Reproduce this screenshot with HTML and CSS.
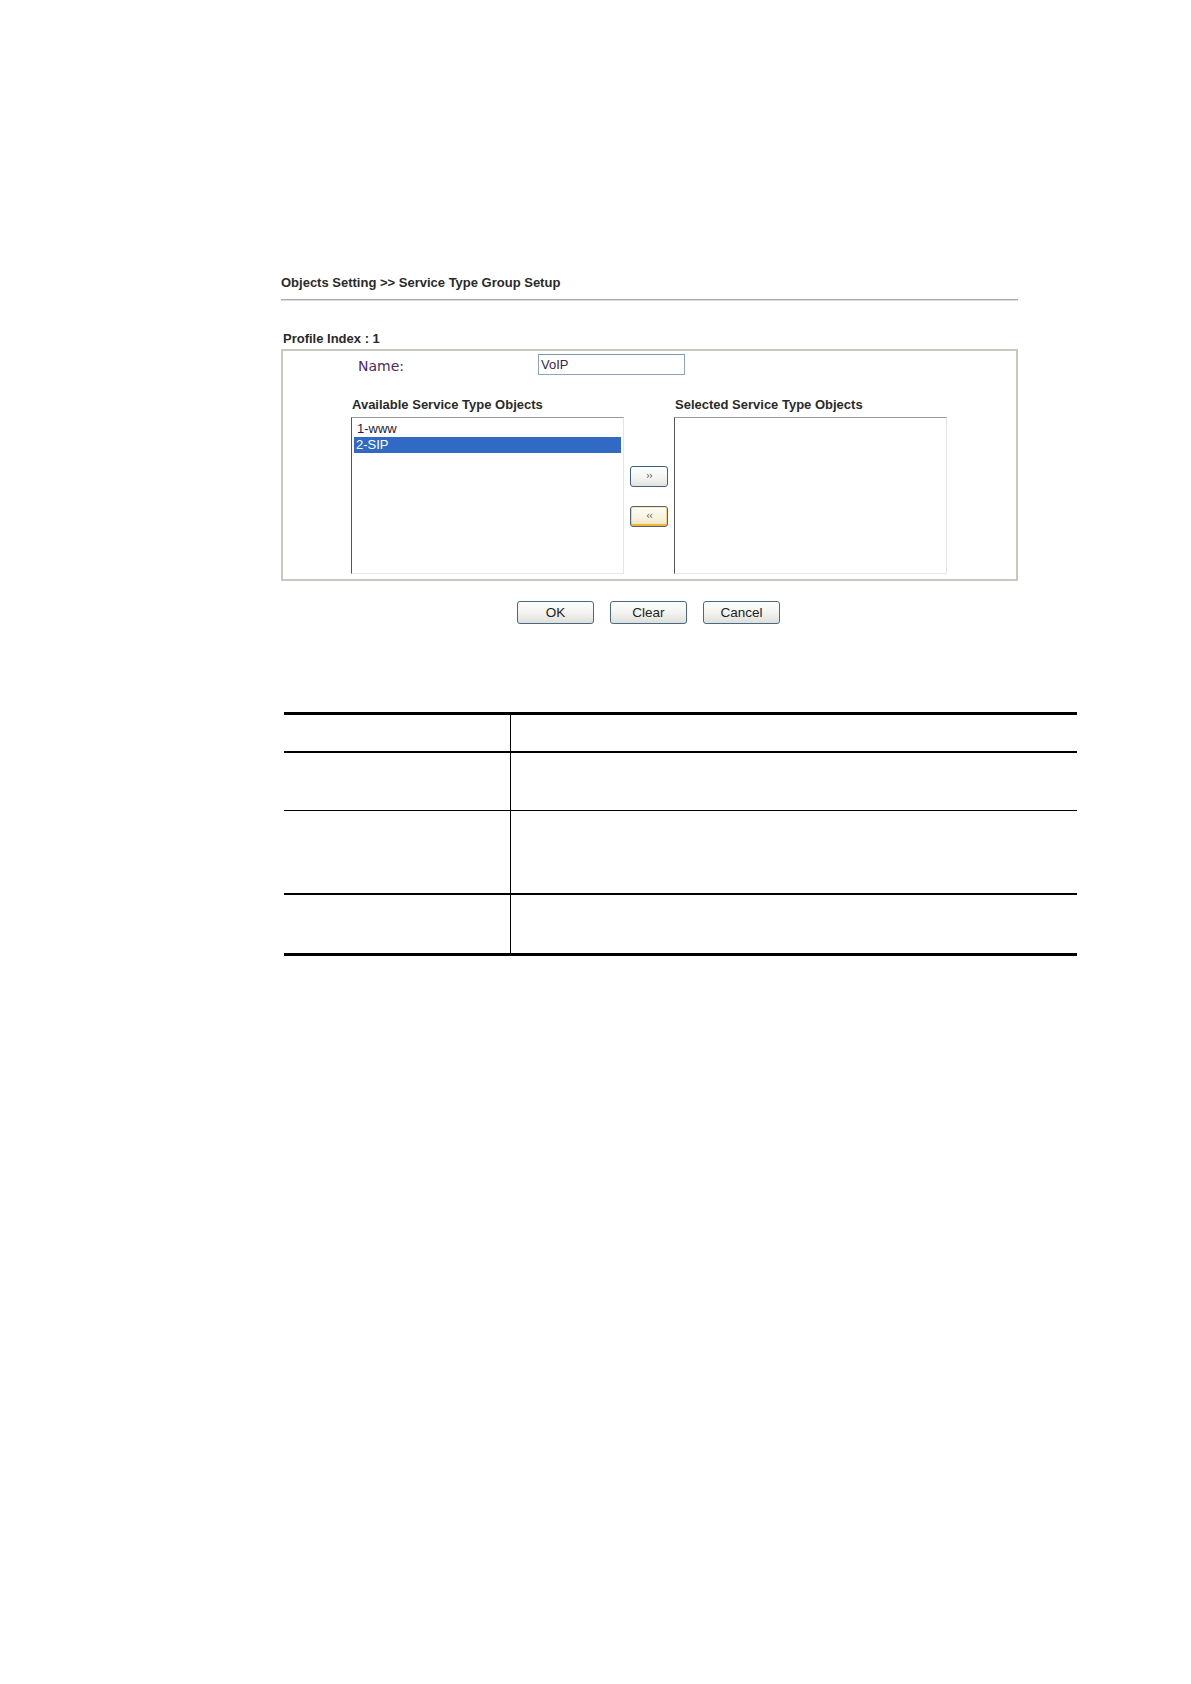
FILE: index.html
```html
<!DOCTYPE html>
<html lang="en">
<head>
<meta charset="utf-8">
<title>Objects Setting &gt;&gt; Service Type Group Setup</title>
<link rel="stylesheet" href="styles.css">
</head>
<body>
<div class="page">
  <div class="title">Objects Setting &gt;&gt; Service Type Group Setup</div>
  <div class="rule"></div>
  <div class="profile">Profile Index : 1</div>
  <div class="box">
    <div class="name-row">
      <span class="name-label">Name:</span>
      <input class="name-input" type="text" value="VoIP">
    </div>
    <div class="lists">
      <div class="list-col">
        <div class="list-label">Available Service Type Objects</div>
        <div class="listbox">
          <div class="item">1-www</div>
          <div class="item selected">2-SIP</div>
        </div>
      </div>
      <div class="move-col">
        <button class="move">&rsaquo;&rsaquo;</button>
        <button class="move hot">&lsaquo;&lsaquo;</button>
      </div>
      <div class="list-col">
        <div class="list-label sel">Selected Service Type Objects</div>
        <div class="listbox"></div>
      </div>
    </div>
  </div>
  <div class="actions">
    <button class="btn">OK</button>
    <button class="btn">Clear</button>
    <button class="btn">Cancel</button>
  </div>
</div>
<div class="doc-table">
  <div class="trow r1"><div class="tc left"></div><div class="tc right"></div></div>
  <div class="trow r2"><div class="tc left"></div><div class="tc right"></div></div>
  <div class="trow r3"><div class="tc left"></div><div class="tc right"></div></div>
  <div class="trow r4"><div class="tc left"></div><div class="tc right"></div></div>
</div>
</body>
</html>
```
FILE: styles.css
```css
html, body {
  margin: 0;
  padding: 0;
  background: #ffffff;
}
body {
  font-family: "Liberation Sans", Arial, sans-serif;
  color: #111;
}
.page {
  margin-left: 281px;
  width: 737px;
  padding-top: 275px;
}
.title {
  font-size: 13px;
  font-weight: bold;
  line-height: 16px;
  color: #2a2a2a;
}
.rule {
  margin-top: 8px;
  height: 1px;
  background: #a8a8a8;
  border-bottom: 1px solid #dcdcdc;
}
.profile {
  margin-top: 30px;
  margin-left: 2px;
  font-size: 13px;
  font-weight: bold;
  line-height: 16px;
  color: #2a2a2a;
}
.box {
  margin-top: 2px;
  border: 2px solid #c6c9be;
  height: 228px;
  box-sizing: content-box;
  padding: 0;
}
.name-row {
  display: flex;
  align-items: center;
  padding-top: 3px;
  height: 21px;
}
.name-label {
  font-family: "DejaVu Sans", Verdana, sans-serif;
  font-size: 14px;
  color: #4a2c5c;
  margin-left: 75px;
  margin-top: 3px;
  width: 180px;
}
.name-input {
  box-sizing: border-box;
  width: 147px;
  height: 21px;
  margin: 0;
  border: 1px solid #8ea3bd;
  border-top-color: #7f96b4;
  padding: 0 2px;
  font-family: "Liberation Sans", Arial, sans-serif;
  font-size: 13px;
  color: #3a2648;
  background: #fff;
  outline: none;
}
.lists {
  display: flex;
  margin-top: 22px;
  margin-left: 68px;
}
.list-col {
  display: flex;
  flex-direction: column;
}
.list-label {
  font-size: 13px;
  font-weight: bold;
  line-height: 16px;
  color: #2a2a2a;
  margin-left: 1px;
  height: 16px;
  margin-bottom: 4px;
}
.listbox {
  box-sizing: border-box;
  width: 273px;
  height: 157px;
  border-top: 1px solid #9a9a9a;
  border-left: 1px solid #555555;
  border-right: 1px solid #e4e4e4;
  border-bottom: 1px solid #e8e8e8;
  background: #fff;
  padding: 3px 2px 0 2px;
}
.item {
  font-size: 13px;
  line-height: 16px;
  height: 16px;
  padding-left: 3px;
  color: #2a1a35;
}
.item.selected {
  background: #316ac5;
  color: #ffffff;
  padding-left: 2px;
}
.move-col {
  display: flex;
  flex-direction: column;
  width: 50px;
  align-items: center;
  padding-top: 69px;
  gap: 19px;
}
.move {
  box-sizing: border-box;
  width: 38px;
  height: 21px;
  margin: 0;
  padding: 0 0 2px 0;
  border: 1px solid #3f5f80;
  border-radius: 3px;
  background: linear-gradient(#ffffff, #f4f4f2 55%, #e2e2dc);
  font-family: "DejaVu Sans", sans-serif;
  font-size: 10px;
  line-height: 14px;
  color: #555;
  letter-spacing: -1px;
  cursor: pointer;
}
.move.hot {
  border-color: #54606a;
  background: linear-gradient(#fffdf5, #f8f3e2 55%, #efe3bc);
  box-shadow: inset 0 -2px 0 #f1b53c, inset 0 1px 0 #fce8b0, inset 1px 0 0 #f7d384, inset -1px 0 0 #f7d384;
}
.actions {
  display: flex;
  justify-content: center;
  gap: 16px;
  margin-top: 20px;
  padding-right: 2px;
}
.btn {
  box-sizing: border-box;
  width: 77px;
  height: 23px;
  margin: 0;
  padding: 0;
  border: 1px solid #476888;
  border-radius: 3px;
  background: linear-gradient(#ffffff, #f3f3f1 50%, #dfdfd9);
  box-shadow: inset 0 1px 0 #ffffff;
  font-family: "Liberation Sans", Arial, sans-serif;
  font-size: 13.5px;
  color: #222;
  cursor: pointer;
}
.doc-table {
  margin-top: 88px;
  margin-left: 284px;
  width: 793px;
  border-top: 3px solid #000;
  border-bottom: 3px solid #000;
}
.trow {
  display: flex;
}
.tc.left {
  width: 226px;
  border-right: 1px solid #000;
}
.tc.right {
  flex: 1;
}
.r1 { height: 36px; border-bottom: 2px solid #000; }
.r2 { height: 57px; border-bottom: 1px solid #000; }
.r3 { height: 82px; border-bottom: 2px solid #000; }
.r4 { height: 58px; }
```
